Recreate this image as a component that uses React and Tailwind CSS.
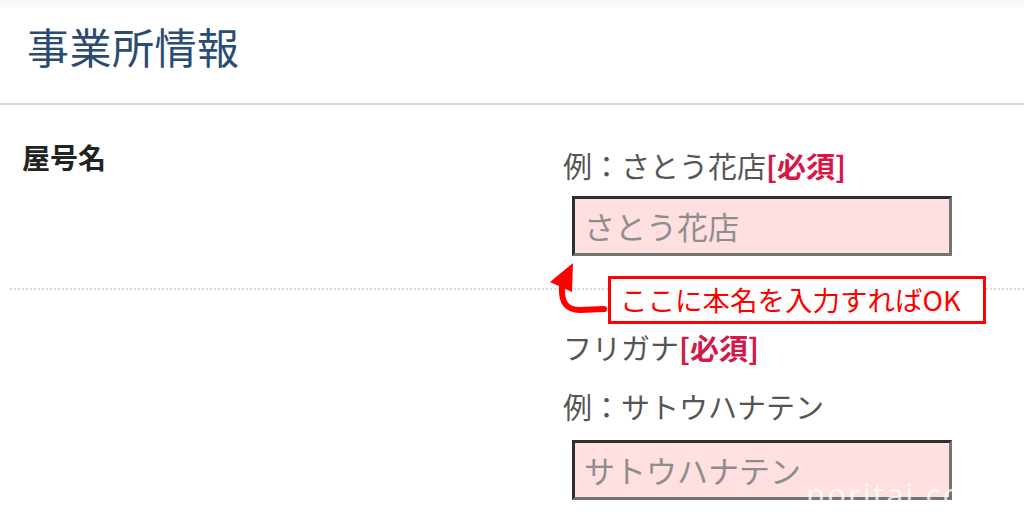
export default function App() {
  return (
    <div className="relative w-[1024px] h-[527px] overflow-hidden bg-white font-['Noto_Sans_CJK_JP','Noto_Sans',sans-serif]">
      {/* top strip */}
      <div className="h-[7px] bg-[#f9f9f9]" />

      {/* header */}
      <header className="h-[98px] flex items-center pl-[27px] border-b-2 border-[#d6d6d6]">
        <h1 className="text-[42px] leading-none text-[#2b4c72] tracking-[0.5px] -mt-[18px]">
          事業所情報
        </h1>
      </header>

      {/* 屋号名 */}
      <section className="flex pt-[31px]">
        <div className="w-[563px] pl-[22px] text-[28px] font-bold text-[#222] leading-[42px]">
          屋号名
        </div>
        <div className="flex flex-col">
          <p className="text-[29px] leading-[42px] text-[#555] mt-[8px]">
            例：さとう花店<span className="font-bold text-[#d4184a]">[必須]</span>
          </p>
          <div className="ml-[9px] mt-[10px] w-[380px] h-[60px] bg-[#ffdfe0] border-[3px] border-t-[#2e2e2e] border-l-[#2e2e2e] border-b-[#747474] border-r-[#747474] flex items-center pl-[9px]">
            <span className="text-[31px] text-[#8e8e8e]">さとう花店</span>
          </div>
        </div>
      </section>

      <div className="ml-[10px] mt-[32px] border-t-2 border-dotted border-[#d9d9d9]" />

      {/* フリガナ */}
      <section className="flex pt-[37px]">
        <div className="w-[563px]" />
        <div className="flex flex-col">
          <p className="text-[29px] leading-[42px] text-[#555] -mt-[1px]">
            フリガナ<span className="font-bold text-[#d4184a]">[必須]</span>
          </p>
          <p className="text-[29px] leading-[42px] text-[#555] mt-[17px]">例：サトウハナテン</p>
          <div className="ml-[9px] mt-[13px] w-[380px] h-[60px] bg-[#ffdfe0] border-[3px] border-t-[#2e2e2e] border-l-[#2e2e2e] border-b-[#747474] border-r-[#747474] flex items-center pl-[9px]">
            <span className="text-[31px] text-[#8e8e8e]">サトウハナテン</span>
          </div>
        </div>
      </section>

      {/* annotation arrow */}
      <svg className="absolute left-[540px] top-[255px]" width="75" height="65" viewBox="0 0 75 65">
        <polygon points="33,8 10,27 32,37" fill="#ff0000" />
        <path d="M22 32 C21 48 27 55 40 55 L64 54" fill="none" stroke="#ff0000" strokeWidth="6" strokeLinecap="round" />
      </svg>

      {/* annotation box */}
      <div className="absolute left-[608px] top-[276px] w-[378px] h-[48px] bg-white border-[3px] border-[#ff0000] flex items-center pl-[9px]">
        <span className="text-[27.5px] leading-none text-[#ff0000]">ここに本名を入力すればOK</span>
      </div>

      {/* watermark */}
      <div className="absolute left-[806px] top-[479px] text-[31px] leading-none tracking-[2px] text-white/75 font-['Noto_Sans',sans-serif]">
        noritai.com
      </div>
    </div>
  );
}
